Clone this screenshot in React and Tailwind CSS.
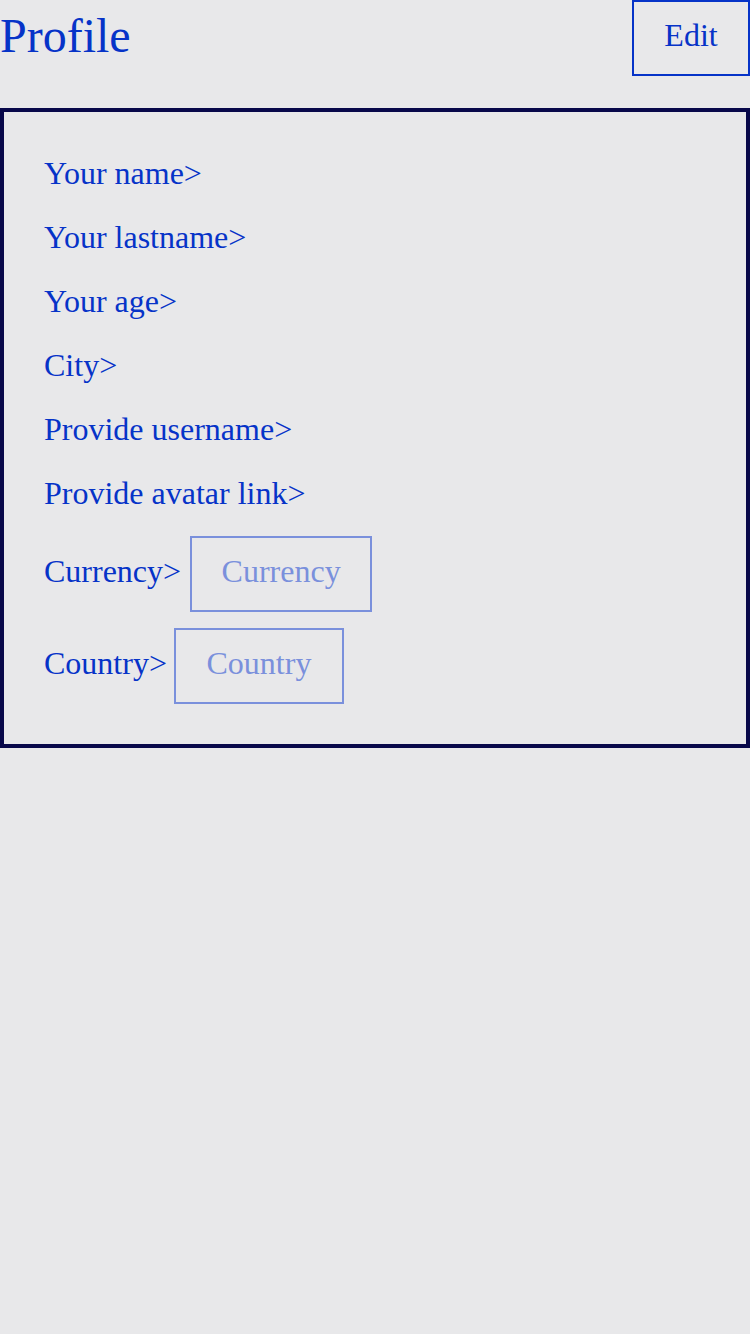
const FIELDS = ['Your name>', 'Your lastname>', 'Your age>', 'City>', 'Provide username>', 'Provide avatar link>'];

const serif = "font-['Liberation_Serif','Times_New_Roman',serif]";

function Picker({ label, width }) {
  return (
    <button className={`${width} border-2 border-[#7a90dc] pt-[9px] pb-[15px] text-center text-[32px] leading-[48px] text-[#7a90dc]`}>
      {label}
    </button>
  );
}

export default function App() {
  return (
    <div className={`min-h-[1334px] w-[750px] bg-[#e8e8ea] ${serif} text-[#0633c8]`}>
      {/* Header */}
      <div className="flex items-start justify-between">
        <h1 className="text-[48px] leading-[72px]">Profile</h1>
        <button className="w-[118px] border-2 border-[#0633c8] pt-[9px] pb-[15px] text-center text-[32px] leading-[48px]">
          Edit
        </button>
      </div>

      {/* Card */}
      <div className="mt-8 border-4 border-[#08084a] px-10 pt-[37px] pb-10">
        <div className="flex flex-col gap-4">
          {FIELDS.map((f) => (
            <p key={f} className="text-[32px] leading-[48px]">{f}</p>
          ))}
        </div>
        <div className="mt-[19px] flex items-baseline gap-[9px] text-[32px] leading-[48px]">
          <span>Currency&gt;</span>
          <Picker label="Currency" width="w-[182px]" />
        </div>
        <div className="mt-4 flex items-baseline gap-[7px] text-[32px] leading-[48px]">
          <span>Country&gt;</span>
          <Picker label="Country" width="w-[170px]" />
        </div>
      </div>
    </div>
  );
}
